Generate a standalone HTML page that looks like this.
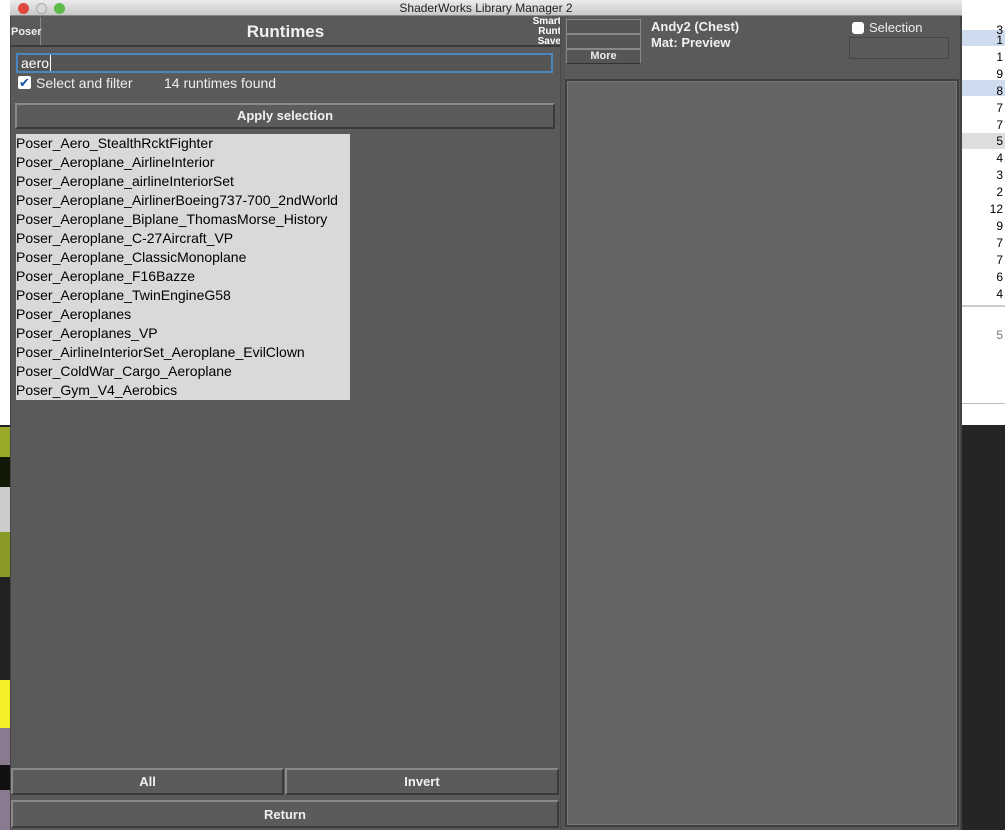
<!DOCTYPE html>
<html><head><meta charset="utf-8"><style>
*{margin:0;padding:0;box-sizing:border-box}
body{width:1005px;height:830px;position:relative;overflow:hidden;background:#fff;font-family:"Liberation Sans","DejaVu Sans",sans-serif}
.a{position:absolute}
.btn{position:absolute;background:#5b5b5b;border-top:2px solid #8a8a8a;border-left:2px solid #8a8a8a;border-bottom:2px solid #3a3a3a;border-right:2px solid #3a3a3a;color:#f0f0f0;font-weight:bold;font-size:13px;text-align:center}
.row{height:19px;line-height:19px;font-size:14px;color:#000;padding-left:0px;white-space:nowrap}
.num{position:absolute;right:2px;font-size:12px;color:#000}
</style></head><body>
<div class="a" style="left:962px;top:0;width:43px;height:425px;background:#fff"></div>
<div class="a" style="left:962px;top:30px;width:43px;height:16px;background:#cfdcef"></div>
<div class="a" style="left:962px;top:80px;width:43px;height:16px;background:#cfdcef"></div>
<div class="a" style="left:962px;top:133px;width:43px;height:16px;background:#ddd"></div>
<div class="a" style="left:962px;top:305px;width:43px;height:2px;background:#ccc"></div>
<div class="a" style="left:962px;top:403px;width:43px;height:1px;background:#bbb"></div>
<div class="a" style="left:962px;top:425px;width:43px;height:405px;background:#252525"></div>
<div class="num" style="top:23px">3</div><div class="num" style="top:33px">1</div><div class="num" style="top:50px">1</div><div class="num" style="top:67px">9</div><div class="num" style="top:84px">8</div><div class="num" style="top:101px">7</div><div class="num" style="top:118px">7</div><div class="num" style="top:134px">5</div><div class="num" style="top:151px">4</div><div class="num" style="top:168px">3</div><div class="num" style="top:185px">2</div><div class="num" style="top:202px">12</div><div class="num" style="top:219px">9</div><div class="num" style="top:236px">7</div><div class="num" style="top:253px">7</div><div class="num" style="top:270px">6</div><div class="num" style="top:287px">4</div><div class="num" style="top:328px;color:#777">5</div>
<div class="a" style="left:0;top:425px;width:11px;height:405px;background:#222"></div>
<div class="a" style="left:0;top:427px;width:11px;height:30px;background:#9aa82a"></div>
<div class="a" style="left:0;top:457px;width:11px;height:30px;background:#111a05"></div>
<div class="a" style="left:0;top:487px;width:11px;height:45px;background:#ccc"></div>
<div class="a" style="left:0;top:532px;width:11px;height:45px;background:#8a9a24"></div>
<div class="a" style="left:0;top:680px;width:11px;height:48px;background:#f4ee2a"></div>
<div class="a" style="left:0;top:728px;width:11px;height:102px;background:#8a7a90"></div>
<div class="a" style="left:0;top:765px;width:11px;height:25px;background:#111"></div>
<div class="a" style="left:10px;top:0;width:952px;height:830px;background:#5a5a5a;border-left:1px solid #444;border-right:2px solid #444"></div>
<div class="a" style="left:10px;top:0;width:952px;height:16px;background:linear-gradient(#ececec,#c8c8c8);border-bottom:1px solid #888"></div>
<div class="a" style="left:18px;top:3px;width:11px;height:11px;border-radius:50%;background:#e0483e"></div>
<div class="a" style="left:36px;top:3px;width:11px;height:11px;border-radius:50%;background:#d8d8d8;border:1px solid #aaa"></div>
<div class="a" style="left:54px;top:3px;width:11px;height:11px;border-radius:50%;background:#5cb94a"></div>
<div class="a" style="left:10px;top:1px;width:952px;text-align:center;font-size:12px;line-height:14px;color:#222">ShaderWorks Library Manager 2</div>
<div class="a" style="left:11px;top:17px;width:30px;height:29px;border-right:1px solid #888;color:#eee;font-size:11px;font-weight:bold;line-height:30px;text-align:center">Poser</div>
<div class="a" style="left:41px;top:17px;width:489px;height:29px;color:#f0f0f0;font-size:17px;font-weight:bold;line-height:30px;text-align:center">Runtimes</div>
<div class="a" style="left:11px;top:45px;width:550px;height:2px;background:#3a3a3a"></div>
<div class="a" style="left:530px;top:17px;width:31px;color:#fff;font-size:10px;font-weight:bold;line-height:10px;text-align:right">Smart<br>Runt<br>Save</div>
<div class="a" style="left:16px;top:53px;width:537px;height:20px;border:2px solid #4a86c0;background:#555;color:#fff;font-size:14px;line-height:16px;padding-left:3px">aero<span style="border-left:1px solid #fff;margin-left:1px"></span></div>
<div class="a" style="left:18px;top:76px;width:13px;height:13px;background:#fff;border-radius:2px;color:#1a4fa0;font-size:13px;line-height:13px;font-weight:bold;text-align:center">✔</div>
<div class="a" style="left:36px;top:75px;color:#eee;font-size:14px;line-height:16px">Select and filter</div>
<div class="a" style="left:164px;top:75px;color:#eee;font-size:14px;line-height:16px">14 runtimes found</div>
<div class="btn" style="left:15px;top:103px;width:540px;height:26px;line-height:22px">Apply selection</div>
<div class="a" style="left:16px;top:134px;width:334px;height:266px;background:#d9d9d9">
<div class="row">Poser_Aero_StealthRcktFighter</div>
<div class="row">Poser_Aeroplane_AirlineInterior</div>
<div class="row">Poser_Aeroplane_airlineInteriorSet</div>
<div class="row">Poser_Aeroplane_AirlinerBoeing737-700_2ndWorld</div>
<div class="row">Poser_Aeroplane_Biplane_ThomasMorse_History</div>
<div class="row">Poser_Aeroplane_C-27Aircraft_VP</div>
<div class="row">Poser_Aeroplane_ClassicMonoplane</div>
<div class="row">Poser_Aeroplane_F16Bazze</div>
<div class="row">Poser_Aeroplane_TwinEngineG58</div>
<div class="row">Poser_Aeroplanes</div>
<div class="row">Poser_Aeroplanes_VP</div>
<div class="row">Poser_AirlineInteriorSet_Aeroplane_EvilClown</div>
<div class="row">Poser_ColdWar_Cargo_Aeroplane</div>
<div class="row">Poser_Gym_V4_Aerobics</div>
</div>
<div class="btn" style="left:11px;top:768px;width:273px;height:27px;line-height:24px">All</div>
<div class="btn" style="left:285px;top:768px;width:274px;height:27px;line-height:24px">Invert</div>
<div class="btn" style="left:11px;top:800px;width:548px;height:28px;line-height:25px">Return</div>
<div class="a" style="left:560px;top:17px;width:5px;height:813px;background:#555;border-left:1px solid #4a4a4a"></div>
<div class="a" style="left:566px;top:19px;width:75px;height:15px;border:1px solid #888;background:#555"></div>
<div class="a" style="left:566px;top:34px;width:75px;height:15px;border:1px solid #888;background:#555"></div>
<div class="a" style="left:566px;top:49px;width:75px;height:15px;border:1px solid #888;border-bottom-color:#333;background:#555;color:#eee;font-size:11px;font-weight:bold;text-align:center;line-height:13px">More</div>
<div class="a" style="left:651px;top:19px;color:#f0f0f0;font-size:13px;font-weight:bold;line-height:16px">Andy2 (Chest)<br>Mat: Preview</div>
<div class="a" style="left:852px;top:22px;width:12px;height:12px;background:#fff;border-radius:3px"></div>
<div class="a" style="left:869px;top:20px;color:#eee;font-size:13px;line-height:16px">Selection</div>
<div class="a" style="left:849px;top:37px;width:100px;height:22px;border:1px solid #444;background:#5a5a5a"></div>
<div class="a" style="left:565px;top:79px;width:394px;height:748px;background:#656565;border:2px solid #3e3e3e;box-shadow:inset 0 0 0 1px #777"></div>
</body></html>
